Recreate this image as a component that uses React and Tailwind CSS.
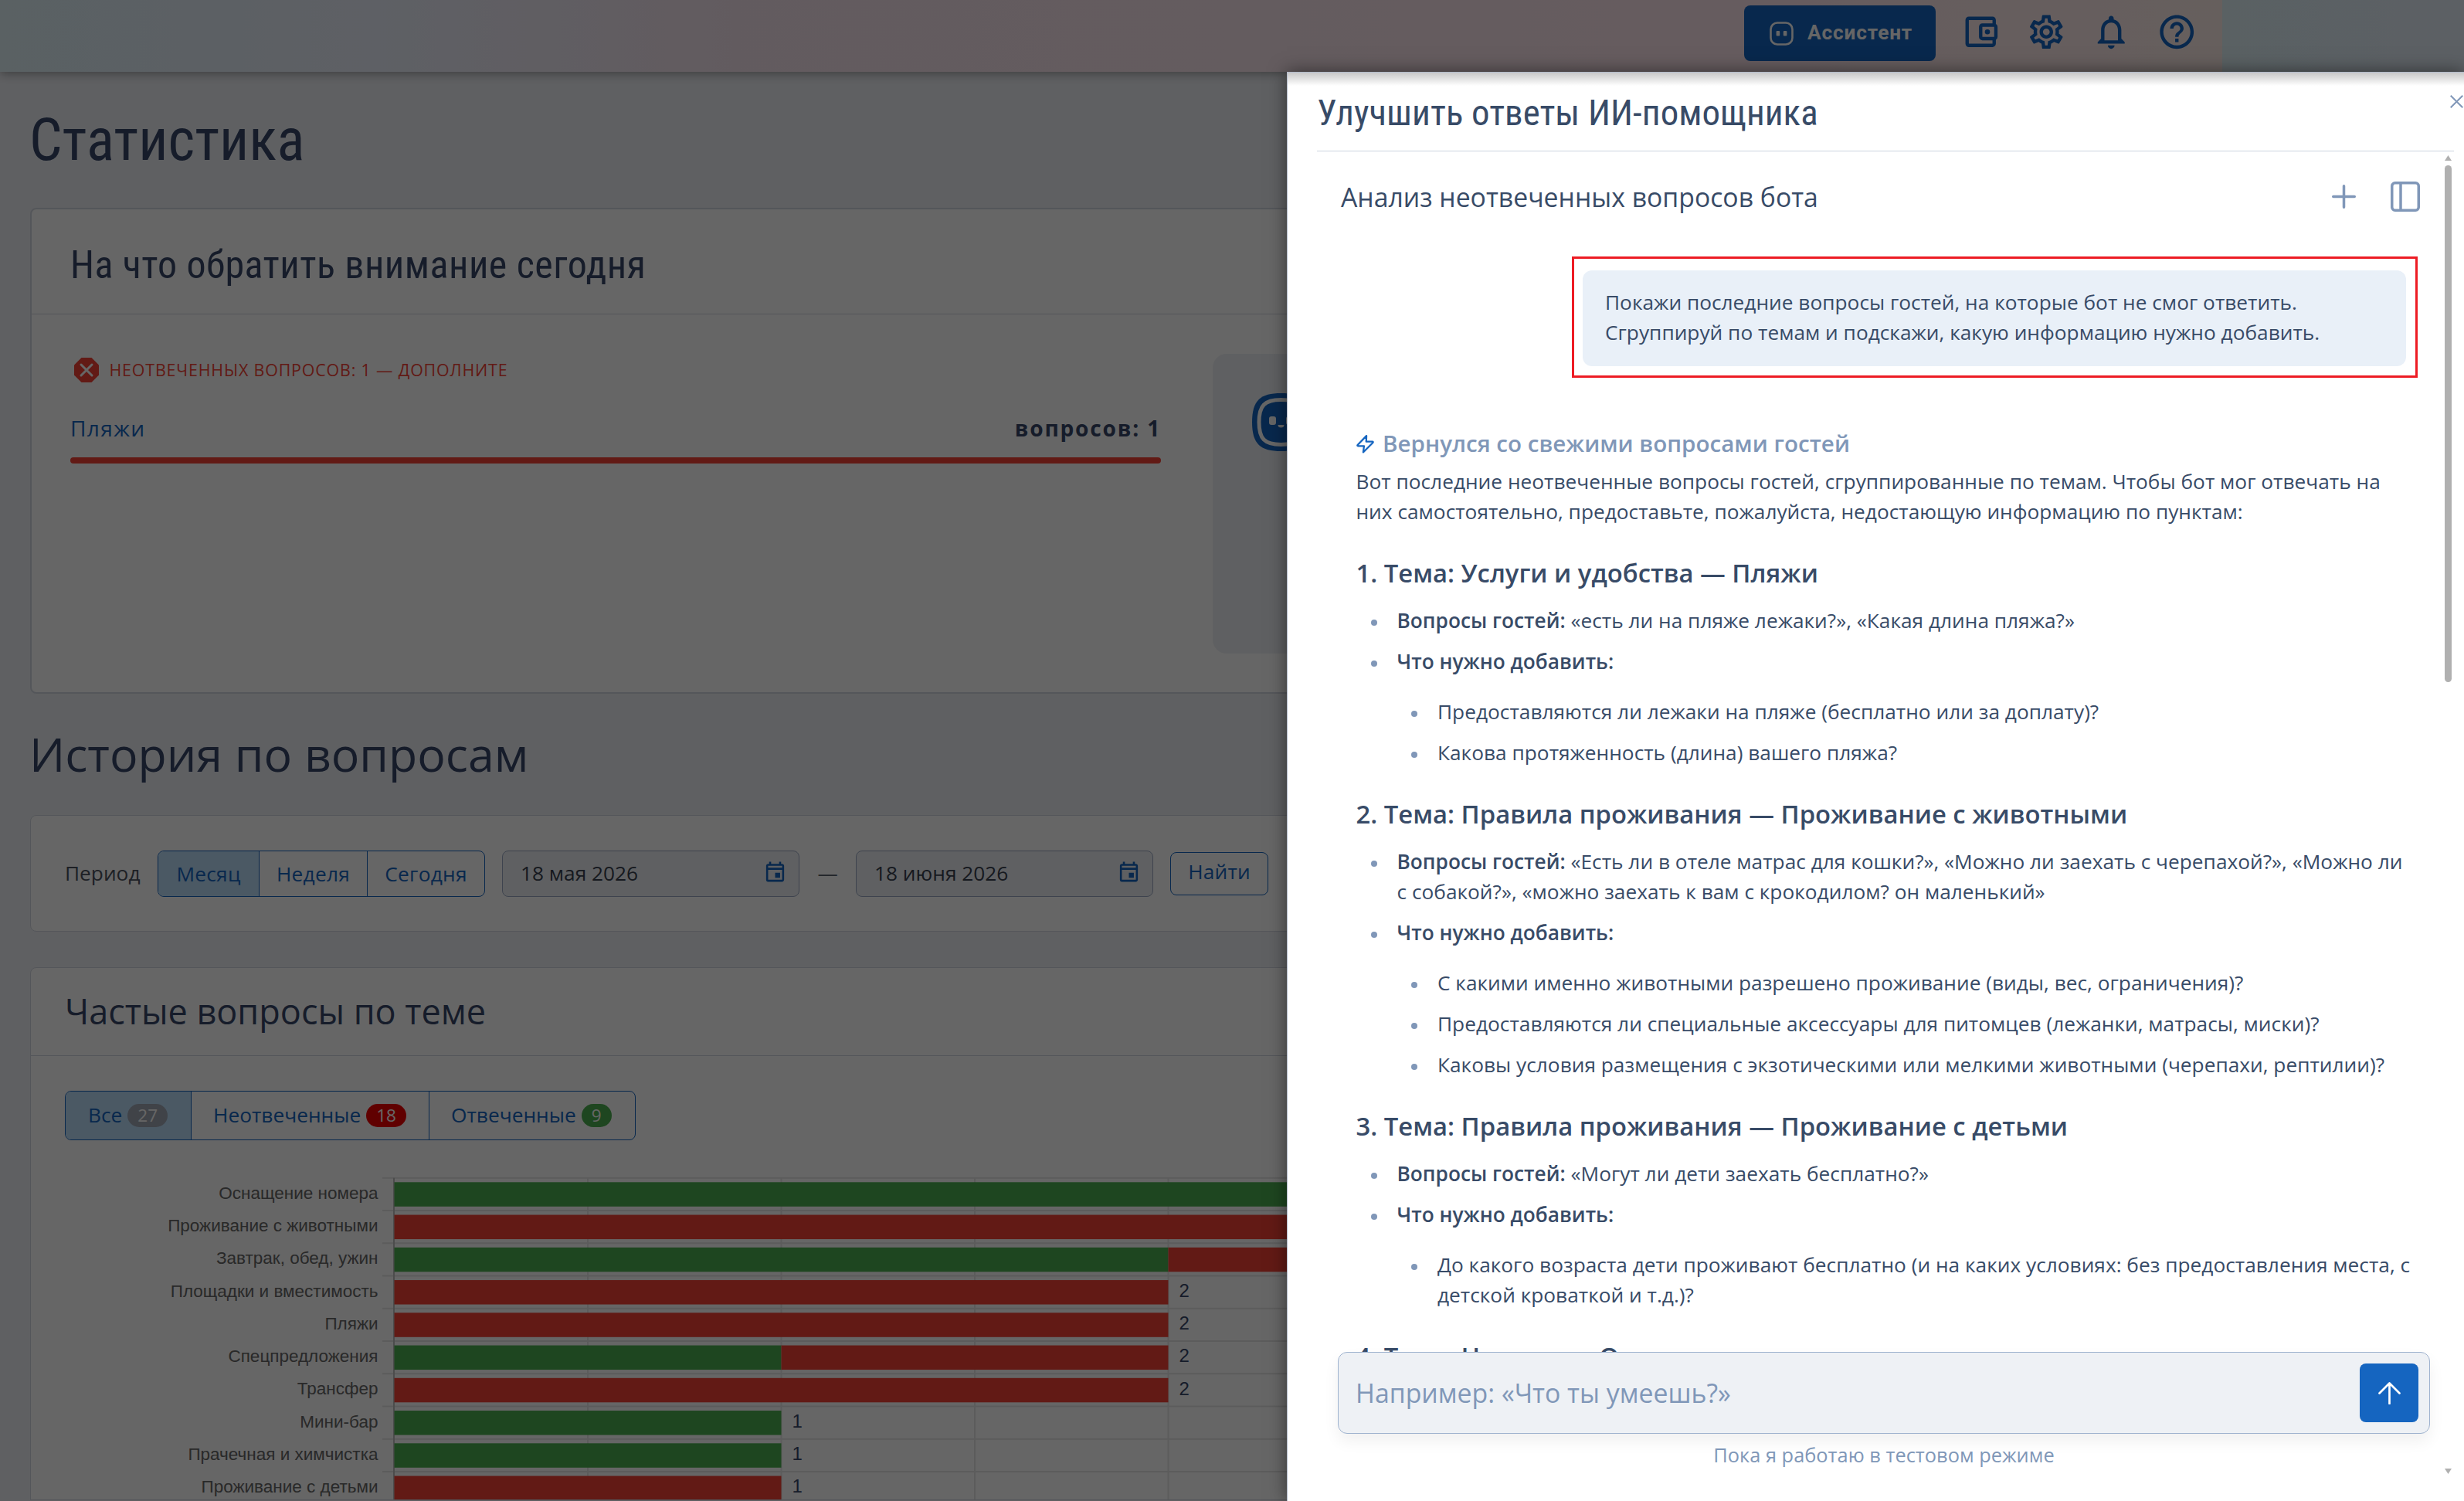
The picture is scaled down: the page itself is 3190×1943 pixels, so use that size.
import {
  MdHelpOutline,
  MdNotificationsNone,
  MdOutlineAccountBalanceWallet,
  MdOutlineEvent,
  MdOutlineSettings,
} from "react-icons/md";

const chartRows = [
  { label: "Оснащение номера", green: 3, red: 0 },
  { label: "Проживание с животными", green: 0, red: 3 },
  { label: "Завтрак, обед, ужин", green: 2, red: 1 },
  { label: "Площадки и вместимость", green: 0, red: 2 },
  { label: "Пляжи", green: 0, red: 2 },
  { label: "Спецпредложения", green: 1, red: 1 },
  { label: "Трансфер", green: 0, red: 2 },
  { label: "Мини-бар", green: 1, red: 0 },
  { label: "Прачечная и химчистка", green: 1, red: 0 },
  { label: "Проживание с детьми", green: 0, red: 1 },
];

const topics = [
  {
    title: "1. Тема: Услуги и удобства — Пляжи",
    questions: "«есть ли на пляже лежаки?», «Какая длина пляжа?»",
    todo: [
      "Предоставляются ли лежаки на пляже (бесплатно или за доплату)?",
      "Какова протяженность (длина) вашего пляжа?",
    ],
  },
  {
    title: "2. Тема: Правила проживания — Проживание с животными",
    questions:
      "«Есть ли в отеле матрас для кошки?», «Можно ли заехать с черепахой?», «Можно ли с собакой?», «можно заехать к вам с крокодилом? он маленький»",
    todo: [
      "С какими именно животными разрешено проживание (виды, вес, ограничения)?",
      "Предоставляются ли специальные аксессуары для питомцев (лежанки, матрасы, миски)?",
      "Каковы условия размещения с экзотическими или мелкими животными (черепахи, рептилии)?",
    ],
  },
  {
    title: "3. Тема: Правила проживания — Проживание с детьми",
    questions: "«Могут ли дети заехать бесплатно?»",
    todo: [
      "До какого возраста дети проживают бесплатно (и на каких условиях: без предоставления места, с детской кроваткой и т.д.)?",
    ],
  },
];

function Header() {
  return (
    <header className="relative z-10 h-[93px] bg-[linear-gradient(90deg,#e0f2f8_0%,#ebf0fc_17%,#f6e4ee_33%,#ffe6ee_78%,#ffeee9_100%)] bg-[length:2877px_93px] bg-repeat-x shadow-[0_2px_13px_rgba(0,0,0,0.38)]">
      <div className="flex h-[86px] items-center justify-end gap-8 pr-[346px] text-[#1565c0]">
        <button className="flex h-[72px] w-[248px] items-center rounded-lg bg-[#1565c0] pl-[33px] text-white">
          <svg className="h-[31px] w-[31px]" viewBox="0 0 31 31" fill="none">
            <rect x="1.5" y="1.5" width="28" height="28" rx="8.5" stroke="currentColor" strokeWidth="2.6" />
            <rect x="8.6" y="12" width="4.6" height="6.6" rx="1" fill="currentColor" />
            <rect x="17.8" y="12" width="4.6" height="6.6" rx="1" fill="currentColor" />
          </svg>
          <span className="ml-[18px] font-['Roboto',sans-serif] text-[26.25px] font-bold tracking-[0.85px]">Ассистент</span>
        </button>
        <MdOutlineAccountBalanceWallet className="-mt-[3px] h-[52.5px] w-[52.5px]" />
        <MdOutlineSettings className="-mt-[3px] h-[52.5px] w-[52.5px]" />
        <MdNotificationsNone className="-mt-[3px] h-[52.5px] w-[52.5px]" />
        <MdHelpOutline className="-mt-[3px] h-[52.5px] w-[52.5px]" />
      </div>
    </header>
  );
}

function Robot() {
  return (
    <svg className="ml-[51px] mt-[51px] h-[75px] w-[75px]" viewBox="0 0 75 75">
      <path d="M37.5 0C64 0 75 9 75 37.5S64 75 37.5 75 0 66 0 37.5 11 0 37.5 0z" fill="#1565c0" />
      <path
        d="M37.5 8.5C59 8.5 66 16 66 37.5S59 66.5 37.5 66.5 9 59 9 37.5 16 8.5 37.5 8.5z"
        fill="none"
        stroke="#fff"
        strokeWidth="5"
      />
      <rect x="22" y="30" width="9" height="11" rx="3" fill="#fff" />
      <rect x="44" y="30" width="9" height="11" rx="3" fill="#fff" />
      <path d="M33.5 41h8a4 3.5 0 0 1-8 0z" fill="#fff" />
    </svg>
  );
}

function Attention() {
  return (
    <section className="h-[629px] w-[3112px] rounded-lg border-2 border-[#d3d8e2] bg-white">
      <div className="flex h-[136px] items-center border-b border-[#d3d8e2] pl-[50px] pt-[8px]">
        <h2 className="font-['Roboto_Condensed',sans-serif] text-[50px] leading-[60px] tracking-[0.47px]">
          На что обратить внимание сегодня
        </h2>
      </div>
      <div className="flex pl-[50px] pt-[51px]">
        <div className="w-[1412px] pt-[5px]">
          <div className="flex h-8 items-center text-[#f44336]">
            <svg className="ml-[5px] h-8 w-8" viewBox="0 0 32 32">
              <path d="M9.5 0h13L32 9.5v13L22.5 32h-13L0 22.500v-13z" fill="#f44336" />
              <path d="M9 9l14 14M23 9L9 23" stroke="#fff" strokeWidth="3" strokeLinecap="round" />
            </svg>
            <span className="ml-[13.5px] text-[21.4px] leading-8 tracking-[0.84px]">НЕОТВЕЧЕННЫХ ВОПРОСОВ: 1 — ДОПОЛНИТЕ</span>
          </div>
          <div className="mt-[38px] flex justify-between text-[28.1px] leading-[42px]">
            <span className="tracking-[1.4px] text-[#1565c0]">Пляжи</span>
            <span className="font-bold tracking-[1.8px]">вопросов: 1</span>
          </div>
          <div className="mt-[17px] h-2 rounded bg-[#f44336]" />
        </div>
        <div className="ml-[67px] h-[388px] flex-1 rounded-l-[18px] bg-[#eef1f5]">
          <Robot />
        </div>
      </div>
    </section>
  );
}

function DateField({ value }) {
  return (
    <div className="flex h-[60px] w-[385px] items-center justify-between rounded-lg border border-[#9ca9c4] bg-[#eef1f5] pl-[23px] pr-[15px] text-[#37404f]">
      <span>{value}</span>
      <MdOutlineEvent className="-mt-1 h-[31px] w-[31px] text-[#1565c0]" />
    </div>
  );
}

function Filters() {
  return (
    <section className="flex h-[151px] w-[3112px] items-center rounded-lg border border-[#d3d8e2] bg-white pl-[44px] text-[26.25px] text-[#555d69]">
      <span className="w-[120px] text-[#4b525d]">Период</span>
      <div className="flex h-[60px] items-stretch overflow-hidden rounded-lg border border-[#1565c0] leading-[58px] tracking-[0.25px] text-[#1565c0]">
        <span className="w-[130px] bg-[#bbdefb] text-center">Месяц</span>
        <span className="w-[140px] border-l border-[#1565c0] text-center">Неделя</span>
        <span className="w-[152px] border-l border-[#1565c0] text-center">Сегодня</span>
      </div>
      <div className="ml-[22px] flex items-center">
        <DateField value="18 мая 2026" />
        <span className="w-[73px] text-center">—</span>
        <DateField value="18 июня 2026" />
      </div>
      <button className="ml-[22px] h-[56px] w-[127px] rounded-lg border border-[#1565c0] pb-1 tracking-[0.2px] text-[#1565c0]">Найти</button>
    </section>
  );
}

function Chart() {
  const x0 = 510.5;
  const unit = 501;
  const top = 1526.7;
  const pitch = 42.25;
  return (
    <svg className="block h-[465px] w-[1640px] font-['Liberation_Sans',sans-serif]" viewBox="84 1478 1640 465">
      {Array.from({ length: 11 }).map((_, i) => (
        <path key={i} d={`M495 ${top + i * pitch}H1724`} stroke="#e5e5e5" strokeWidth="2" />
      ))}
      {[0.5, 1, 1.5, 2].map((v) => (
        <path key={v} d={`M${x0 + v * unit} ${top}V1943`} stroke="#e5e5e5" strokeWidth="2" />
      ))}
      <path d={`M${x0 - 0.5} ${top}V1943`} stroke="#bfbfbf" strokeWidth="2" />
      {chartRows.map(({ label, green, red }, i) => {
        const y = top + i * pitch;
        return (
          <g key={label}>
            <rect x={x0} y={y + 5.6} width={green * unit} height="31.5" fill="#4caf50" />
            <rect x={x0 + green * unit} y={y + 5.6} width={red * unit} height="31.5" fill="#f44336" />
            <text x="489.5" y={y + 27.2} textAnchor="end" fontSize="22.5" fill="#666">
              {label}
            </text>
            {green + red < 3 && (
              <text x={x0 + (green + red) * unit + 14} y={y + 27.5} fontSize="24" fill="#37486a">
                {green + red}
              </text>
            )}
          </g>
        );
      })}
    </svg>
  );
}

function Topics() {
  return (
    <section className="mt-[46px] w-[3112px] rounded-t-lg border border-[#d3d8e2] bg-white">
      <div className="flex h-[114px] items-center border-b border-[#d3d8e2] pb-[2px] pl-[44px]">
        <h2 className="text-[45px] leading-[60px]">Частые вопросы по теме</h2>
      </div>
      <div className="pl-[44px] pt-[45px]">
        <div className="flex h-[64px] w-[739px] overflow-hidden rounded-lg border border-[#1565c0] text-[26.3px] text-[#1565c0]">
          <div className="flex w-[162px] items-center gap-[7px] bg-[#bbdefb] pl-[29px]">
            Все <span className="rounded-full bg-[#a0a8b4] px-[13px] text-[22.5px] leading-[30px] text-white">27</span>
          </div>
          <div className="flex w-[308px] items-center gap-[7px] border-l border-[#1565c0] pl-[28px]">
            Неотвеченные <span className="rounded-full bg-[#f00000] px-[13px] text-[22.5px] leading-[30px] text-white">18</span>
          </div>
          <div className="flex flex-1 items-center gap-[7px] border-l border-[#1565c0] pl-[28px]">
            Отвеченные <span className="rounded-full bg-[#4caf50] px-[13px] text-[22.5px] leading-[30px] text-white">9</span>
          </div>
        </div>
        <Chart />
      </div>
    </section>
  );
}

function Item({ children }) {
  return (
    <li className="flex">
      <span className="mr-[26px] mt-[18px] h-2 w-2 shrink-0 rounded-full bg-[#8097b8]" />
      <div className="flex-1">{children}</div>
    </li>
  );
}

function Answer() {
  return (
    <div className="pl-[88.5px] pr-[68px]">
      <div className="flex h-[44px] items-center text-[#8097b8]">
        <svg className="-ml-px h-[25px] w-[25px] text-[#1565c0]" viewBox="0 0 24 24" fill="none" stroke="currentColor" strokeWidth="2.2" strokeLinejoin="round">
          <path d="M13.5 2L2.5 13.5c-.5.6-.3 1.2.5 1.2h7.5L9.5 22.5 21.5 10.5c.5-.6.2-1.2-.5-1.2h-7.8z" />
        </svg>
        <span className="ml-[10.5px] text-[29.6px] font-semibold">Вернулся со свежими вопросами гостей</span>
      </div>
      <p className="-mr-2 mt-[8px]">
        Вот последние неотвеченные вопросы гостей, сгруппированные по темам. Чтобы бот мог отвечать на них самостоятельно,
        предоставьте, пожалуйста, недостающую информацию по пунктам:
      </p>
      {topics.map(({ title, questions, todo }) => (
        <div key={title}>
          <h4 className="mt-[37.3px] text-[32.8px] font-semibold leading-[44px]">{title}</h4>
          <ul className="mt-[20.4px] flex flex-col gap-[13.4px] pl-[19px]">
            <Item>
              <b className="font-semibold">Вопросы гостей:</b> {questions}
            </Item>
            <Item>
              <b className="font-semibold">Что нужно добавить:</b>
              <ul className="mt-[25.7px] flex flex-col gap-[13.4px] pl-[18.5px]">
                {todo.map((t) => (
                  <Item key={t}>{t}</Item>
                ))}
              </ul>
            </Item>
          </ul>
        </div>
      ))}
      <h4 className="mt-[37.3px] text-[32.8px] font-semibold leading-[44px]">4. Тема: Номера — Оснащение номера</h4>
    </div>
  );
}

function Drawer() {
  return (
    <aside className="absolute bottom-0 right-0 top-[93px] z-30 flex w-[1524px] flex-col border-l border-t border-[#b4bccb] bg-white text-[#384b67] shadow-[0_0_22px_rgba(0,0,0,0.5)]">
      <div className="pointer-events-none absolute inset-x-0 top-0 h-[17px] bg-linear-to-b from-black/22 to-transparent" />
      <div className="ml-[38px] mr-[13px] flex h-[102px] shrink-0 items-center border-b border-[#ccd4df] pt-[2px]">
        <h2 className="font-['Roboto_Condensed',sans-serif] text-[46.9px] leading-[60px]">Улучшить ответы ИИ-помощника</h2>
      </div>
      <svg className="absolute right-[1px] top-[29px] h-[17px] w-[17px] text-[#8097b8]" viewBox="0 0 17 17" stroke="currentColor" strokeWidth="2">
        <path d="M.7.7l15.6 15.6M16.3.7L.7 16.3" />
      </svg>
      <div className="flex h-[117px] shrink-0 items-center pl-[69px] pr-[57px]">
        <h3 className="flex-1 text-[33.75px] leading-[50px]">Анализ неотвеченных вопросов бота</h3>
        <svg className="h-[31px] w-[31px] text-[#8097b8]" viewBox="0 0 31 31" stroke="currentColor" strokeWidth="3.5" strokeLinecap="round">
          <path d="M15.5 1.75v27.5M1.75 15.5h27.5" />
        </svg>
        <svg className="ml-[45px] h-[39px] w-[38px] text-[#8097b8]" viewBox="0 0 38 39" fill="none" stroke="currentColor" strokeWidth="3.5">
          <rect x="1.75" y="1.75" width="34.5" height="35.5" rx="4" />
          <path d="M13 2v35" />
        </svg>
      </div>
      <div className="flex min-h-0 flex-1 flex-col overflow-hidden text-[26.28px] leading-[39.375px]">
        <div className="ml-[368px] mt-[19px] w-[1095px] border-[3px] border-[#ed1c24] pb-3 pl-[11px] pr-3 pt-[15px]">
          <div className="h-[124px] rounded-[12px] bg-[#e9f0f8] pl-[29px] pt-[22px]">
            Покажи последние вопросы гостей, на которые бот не смог ответить.
            <br />
            Сгруппируй по темам и подскажи, какую информацию нужно добавить.
          </div>
        </div>
        <div className="mt-[63px]">
          <Answer />
        </div>
      </div>
      <div className="relative flex h-[193px] shrink-0 flex-col bg-white pl-[65px] pr-[44px]">
        <div className="flex h-[106px] items-center justify-between rounded-[12px] border border-[#9fb3cf] bg-[#eef1f5] pl-[22px] pr-[14px] shadow-[0_10px_20px_rgba(0,0,0,0.06)]">
          <span className="text-[33.8px] leading-[50px] text-[#8097b8]">Например: «Что ты умеешь?»</span>
          <button className="flex h-[76px] w-[76px] items-center justify-center rounded-lg bg-[#1565c0]">
            <svg className="h-[29px] w-[29px]" viewBox="0 0 29 29" fill="none" stroke="#fff" strokeWidth="2.7" strokeLinecap="round" strokeLinejoin="round">
              <path d="M14.5 28V1.5M1.5 14.5l13-13 13 13" />
            </svg>
          </button>
        </div>
        <p className="mt-[7px] text-center text-[25.4px] leading-[40px] text-[#8097b8]">Пока я работаю в тестовом режиме</p>
      </div>
      <div className="absolute bottom-[35px] right-4 top-[107px] flex w-[9px] flex-col items-center">
        <svg className="h-[7px] w-[9px]" viewBox="0 0 9 7">
          <path d="M4.5 0L9 7H0z" fill="#b0b0b0" />
        </svg>
        <span className="mt-[6px] h-[669px] w-[9px] rounded-full bg-[#b0b0b0]" />
        <svg className="mt-auto h-[7px] w-[9px]" viewBox="0 0 9 7">
          <path d="M4.5 7L9 0H0z" fill="#b0b0b0" />
        </svg>
      </div>
    </aside>
  );
}

export default function App() {
  return (
    <div className="relative h-[1943px] w-[3190px] overflow-hidden bg-[#eef0f5] font-['Open_Sans',sans-serif] text-[#37486a]">
      <Header />
      <main className="pl-[39px] pt-[43px]">
        <h1 className="-ml-px mb-[43px] font-['Roboto_Condensed',sans-serif] text-[75.1px] leading-[90px]">Статистика</h1>
        <Attention />
        <h1 className="-ml-px mb-[39px] mt-[38px] text-[60.8px] leading-[80px]">История по вопросам</h1>
        <Filters />
        <Topics />
      </main>
      <div className="absolute inset-0 z-20 bg-black/60" />
      <Drawer />
    </div>
  );
}
